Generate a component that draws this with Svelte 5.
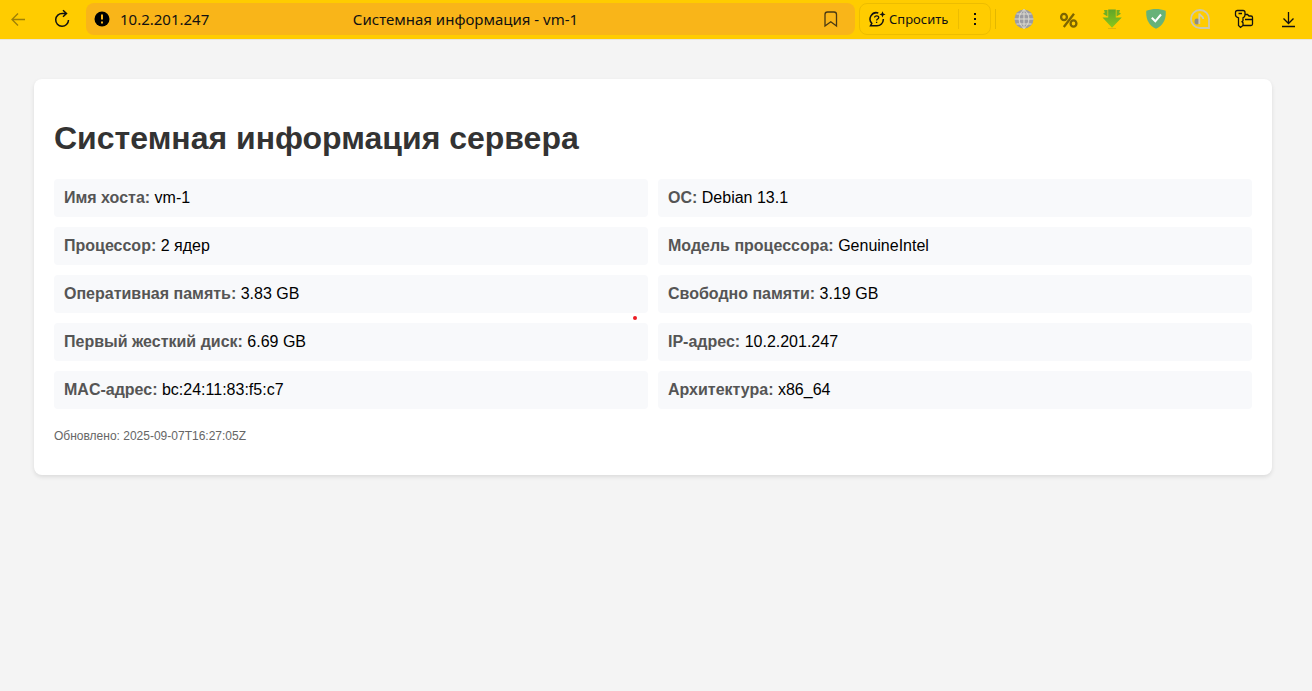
<script>
  const facts = [
    ['Имя хоста:', 'vm-1'],
    ['ОС:', 'Debian 13.1'],
    ['Процессор:', '2 ядер'],
    ['Модель процессора:', 'GenuineIntel'],
    ['Оперативная память:', '3.83 GB'],
    ['Свободно памяти:', '3.19 GB'],
    ['Первый жесткий диск:', '6.69 GB'],
    ['IP-адрес:', '10.2.201.247'],
    ['MAC-адрес:', 'bc:24:11:83:f5:c7'],
    ['Архитектура:', 'x86_64']
  ];
</script>

<header class="toolbar">
  <nav class="nav" aria-label="Навигация">
    <button class="icon faded" aria-label="Назад">
      <svg width="20" height="20" viewBox="0 0 20 20"><path d="M17 10.500H4M10 4.500l-6 6 6 6" /></svg>
    </button>
    <button class="icon" aria-label="Обновить">
      <svg width="20" height="20" viewBox="0 0 20 20"><path d="M16.500 11A6.400 6.400 0 1 1 10.500 4.500h4M11 1.200l3.500 3.300L11 7.800" stroke-width="1.500" /></svg>
    </button>
  </nav>

  <div class="address">
    <button class="icon" aria-label="Соединение не защищено">
      <svg width="16" height="16" viewBox="0 0 16 16">
        <circle cx="8" cy="8" r="7.500" fill="#000" stroke="none" />
        <path d="M8 3.400v5.200M8 10.600v2" stroke="#f9b519" stroke-width="2" />
      </svg>
    </button>
    <span class="host">10.2.201.247</span>
    <span class="title">Системная информация - vm-1</span>
    <button class="icon mark" aria-label="Добавить в закладки">
      <svg width="20" height="20" viewBox="0 0 20 20"><path d="M4 17V5.500Q4 3 6.500 3H13Q15.500 3 15.500 5.500V17l-5.700-4.300z" /></svg>
    </button>
  </div>

  <div class="ask">
    <button class="askbutton">
      <svg width="18" height="18" viewBox="0 0 18 18">
        <path d="M10.300 3A6.300 6.300 0 0 0 3.800 13.300L2.500 15.800h6a6.400 6.400 0 0 0 6.800-6.800" stroke-width="1.500" />
        <path d="M6.600 7.500c.1-2.400 4.300-2.100 4.100.1-.1 1.400-2.100 1.300-2.100 2.800M8.600 11.700v1.300" stroke-width="1.300" />
        <path d="M14.500 1.300l.9 2.200 2.200.9-2.200.9-.9 2.200-.9-2.200-2.200-.9 2.200-.9z" fill="#111" stroke="none" />
      </svg>
      <span>Спросить</span>
    </button>
    <button class="more" aria-label="Меню">
      <svg width="4" height="16" viewBox="0 0 4 16"><path d="M1 2h2v2H1zM1 7h2v2H1zM1 12h2v2H1z" fill="#111" stroke="none" /></svg>
    </button>
  </div>

  <div class="extensions">
    <button class="icon" aria-label="Прокси">
      <svg width="20" height="20" viewBox="0 0 20 20">
        <circle cx="10" cy="10" r="9.500" fill="#9c9ca3" stroke="none" />
        <path d="M10 .500v19M.500 10h19M2.500 5h15M2.500 15h15M10 .500c-6.500 5-6.500 14 0 19M10 .500c6.500 5 6.500 14 0 19" stroke="#dedcd2" stroke-width="1" />
      </svg>
    </button>
    <button class="icon" aria-label="Скидки">
      <svg width="20" height="20" viewBox="0 0 20 20">
        <g stroke="#7d6500" stroke-width="2.300">
          <ellipse cx="6" cy="8" rx="2.900" ry="3.200" />
          <ellipse cx="15.500" cy="14.500" rx="2.900" ry="3.200" />
          <path d="M16 4.800L5.800 18" />
        </g>
      </svg>
    </button>
    <button class="icon" aria-label="Загрузчик">
      <svg width="20" height="20" viewBox="0 0 20 20">
        <defs>
          <linearGradient id="leaf" x1="0" y1="0" x2="0" y2="1">
            <stop offset="0" stop-color="#5fa52a" />
            <stop offset="1" stop-color="#8cc71a" />
          </linearGradient>
        </defs>
        <path d="M6.200.500h7.600v8h6L10 18.800.500 8.500h5.700z" fill="url(#leaf)" stroke="none" />
        <path d="M2 1h3.500v6.500L1 4.800l1.800-1.300zM18 1h-3.500v6.500L19 4.800l-1.800-1.300z" fill="#6fae26" stroke="none" />
        <path d="M6 19.500h8" stroke="#e0b60a" stroke-width="1" />
      </svg>
    </button>
    <button class="icon" aria-label="Защита">
      <svg width="20" height="20" viewBox="0 0 20 20">
        <path d="M10 0c3 0 6.500.600 9.700 1.800C20.300 10 17.500 16 10 19.800 2.500 16-.300 10 .300 1.800 3.500.600 7 0 10 0z" fill="#67b279" stroke="none" />
        <path d="M5.800 8.800l3.500 3.500L15 5.500" stroke="#fff" stroke-width="2" />
      </svg>
    </button>
    <button class="icon" aria-label="Музыка">
      <svg width="20" height="20" viewBox="0 0 20 20">
        <path d="M19 19H10A9 9 0 1 1 19 10z" stroke="#ccc8ae" stroke-width="1.800" />
        <ellipse cx="7" cy="12.500" rx="2.500" ry="3" fill="#8d8d84" stroke="none" />
        <path d="M9.300 15V4.500c.5 2.500 4 2.200 4 5.500" stroke="#d0cbb2" stroke-width="1.800" />
      </svg>
    </button>
    <button class="icon" aria-label="Пароли">
      <svg width="20" height="20" viewBox="0 0 20 20">
        <path d="M3.500 1.500h5.500q2 0 2 2v2.500q0 2-2 2.800v3l-1 1 1 1v2.700L6.500 18.500l-2-2V8.800q-3-1-3-2.800V3.500q0-2 2-2zM4.500 4.500H8M11 5.500h2.500L15 7h2q1.500 0 1.500 1.500V15q0 1.500-1.500 1.500H9M11 10.500h7.500" stroke-width="1.300" />
      </svg>
    </button>
    <button class="icon" aria-label="Загрузки">
      <svg width="20" height="20" viewBox="0 0 20 20"><path d="M10.500 3v11.500M5.500 9.500l5 5 5-5M4 17.500h13" /></svg>
    </button>
  </div>
</header>

<main>
  <section class="card">
    <h1>Системная информация сервера</h1>
    <div class="grid">
      {#each facts as [label, value]}
        <div class="item"><strong>{label}</strong> {value}</div>
      {/each}
      <span class="dot"></span>
    </div>
    <p class="updated">Обновлено: 2025-09-07T16:27:05Z</p>
  </section>
</main>

<style>
  :global(body) {
    margin: 0;
    background: #f4f4f4;
    font-family: "Liberation Sans", Arial, sans-serif;
  }

  button {
    display: flex;
    align-items: center;
    justify-content: center;
    padding: 0;
    border: 0;
    background: none;
    color: #111;
    font: inherit;
  }

  svg {
    display: block;
    flex: none;
    fill: none;
    stroke: #111;
    stroke-width: 1.3;
  }

  .toolbar {
    display: flex;
    align-items: center;
    box-sizing: border-box;
    height: 40px;
    padding: 0 14px 2px 8px;
    border-bottom: 1px solid #e9e6dc;
    background: #fc0;
    color: #111;
    font-family: "Noto Sans", sans-serif;
    font-size: 15px;
    line-height: 20px;
  }

  .nav {
    display: flex;
    gap: 24px;
    margin-right: 14px;
  }

  .faded {
    opacity: 0.4;
  }

  .address {
    display: grid;
    grid-template-columns: auto 1fr auto 1fr auto;
    flex: 1;
    align-items: center;
    height: 32px;
    padding: 0 14px 0 8px;
    box-sizing: border-box;
    border-radius: 8px;
    background: #f9b519;
  }

  .host {
    padding-left: 10px;
  }

  .mark {
    grid-column: 5;
    opacity: 0.75;
  }

  .ask {
    display: flex;
    align-items: center;
    box-sizing: border-box;
    width: 132px;
    height: 32px;
    margin-left: 4px;
    border: 1px solid #edbd00;
    border-radius: 8px;
    font-size: 13px;
  }

  .askbutton {
    gap: 3px;
    padding: 0 10px 0 8px;
    border-right: 1px solid #edbd00;
  }

  .more {
    flex: 1;
    height: 100%;
  }

  .extensions {
    display: flex;
    gap: 24px;
    margin-left: 4px;
    padding-left: 18px;
    border-left: 1px solid #e3b700;
  }

  main {
    padding: 39px 40px 40px 34px;
  }

  .card {
    padding: 20px;
    border-radius: 8px;
    background: #fff;
    box-shadow: 0 2px 4px rgba(0, 0, 0, 0.1);
  }

  h1 {
    margin: 20px 0 22px;
    color: #333;
    font-size: 32px;
    line-height: 38px;
  }

  .grid {
    position: relative;
    display: grid;
    grid-template-columns: 1fr 1fr;
    gap: 10px;
  }

  .item {
    padding: 10px;
    border-radius: 4px;
    background: #f8f9fb;
    color: #000;
    font-size: 16px;
    line-height: 18px;
  }

  strong {
    color: #555;
  }

  .dot {
    position: absolute;
    top: 137px;
    right: calc(50% + 16px);
    width: 4px;
    height: 4px;
    border-radius: 50%;
    background: #ed1c24;
  }

  .updated {
    margin: 20px 0 12px;
    color: #666;
    font-size: 12px;
    line-height: 14px;
  }
</style>
